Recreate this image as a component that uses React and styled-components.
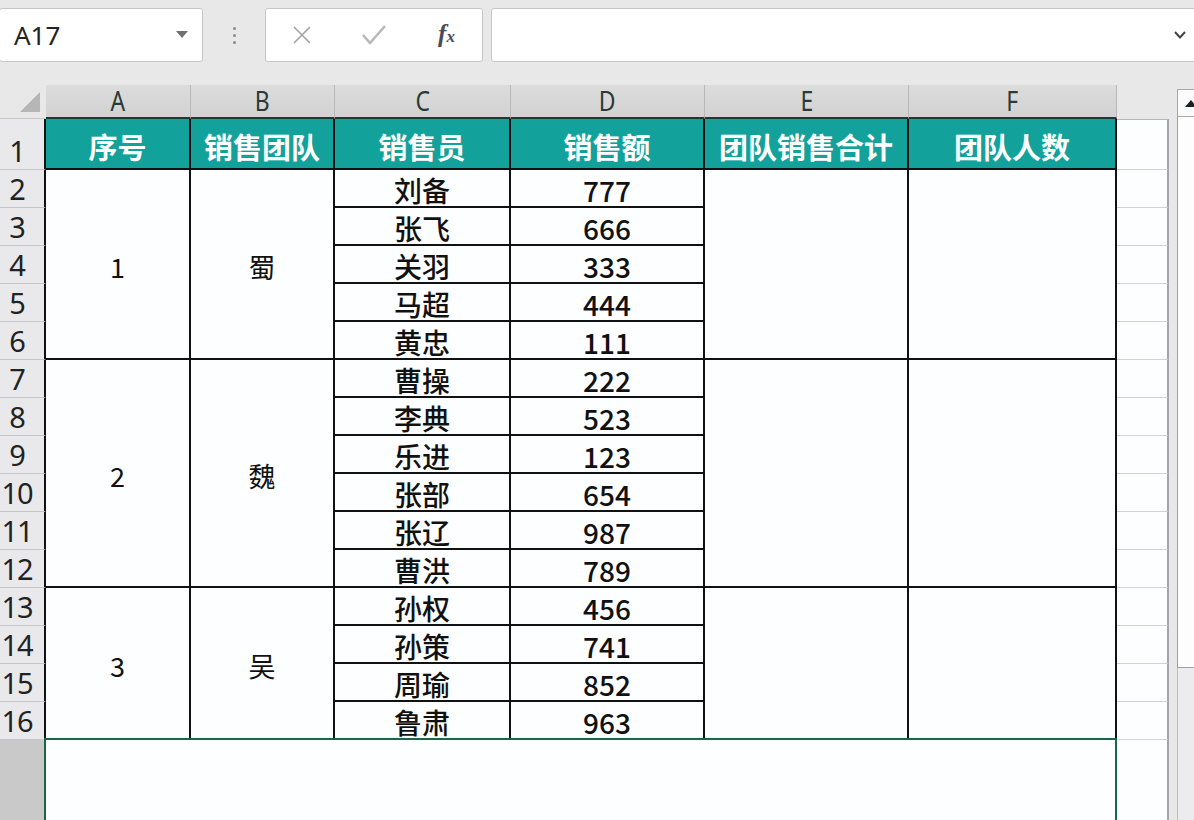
import React from 'react';
import styled, { createGlobalStyle } from 'styled-components';

const GlobalStyle = createGlobalStyle`
  html, body { margin: 0; padding: 0; }
  body {
    background: #e8e8e8;
    font-family: "Noto Sans", "Noto Sans CJK SC", sans-serif;
    overflow: hidden;
  }
`;

const CJK = `"Noto Sans CJK SC", "Noto Sans", sans-serif`;

const Page = styled.div`
  width: 1194px;
  height: 820px;
  overflow: hidden;
  background: #e8e8e8;
  display: flex;
  flex-direction: column;
`;

const FormulaBar = styled.div`
  display: flex;
  align-items: stretch;
  height: 54px;
  margin-top: 8px;
  flex: none;
`;

const NameBox = styled.div`
  width: 204px;
  margin-left: -1px;
  box-sizing: border-box;
  background: #fff;
  border: 1px solid #c6c6c6;
  border-radius: 3px;
  display: flex;
  align-items: center;
  justify-content: space-between;
  padding: 0 14px 0 14px;
  font-size: 26px;
  color: #222;
`;

const Caret = styled.span`
  width: 0;
  height: 0;
  border-left: 6px solid transparent;
  border-right: 6px solid transparent;
  border-top: 7px solid #707070;
  margin-top: -2px;
`;

const DotHolder = styled.div`
  width: 62px;
  display: flex;
  align-items: center;
  justify-content: center;
`;

const DotStack = styled.div`
  display: flex;
  flex-direction: column;
  gap: 4px;
`;

const Dot = styled.span`
  width: 3px;
  height: 3px;
  border-radius: 50%;
  background: #8a8a8a;
`;

const FxBox = styled.div`
  width: 218px;
  box-sizing: border-box;
  background: #fff;
  border: 1px solid #c6c6c6;
  border-radius: 3px;
  display: flex;
`;

const FxButton = styled.div`
  width: 72px;
  display: flex;
  align-items: center;
  justify-content: center;
`;

const FxLabel = styled.span`
  font-family: "Liberation Serif", "DejaVu Serif", serif;
  font-style: italic;
  font-weight: bold;
  color: #4a4a58;
  font-size: 25px;
  letter-spacing: -1px;
  margin-top: -2px;
  & > small {
    font-size: 17px;
    margin-left: 1px;
  }
`;

const FormulaInput = styled.div`
  flex: 1;
  margin-left: 8px;
  margin-right: -4px;
  background: #fff;
  border: 1px solid #c6c6c6;
  border-radius: 3px;
  display: flex;
  align-items: center;
  justify-content: flex-end;
  padding-right: 10px;
`;

const SheetArea = styled.div`
  display: flex;
  margin-top: 23px;
  flex: 1;
  min-height: 0;
`;

const Grid = styled.div`
  display: grid;
  grid-template-columns: 46px 145px 144px 176px 194px 204px 208px 52px;
  grid-template-rows: 34px 51px repeat(15, 38px) 120px;
  width: 1169px;
  flex: none;
  & > * { box-sizing: border-box; }
`;

const Corner = styled.div`
  position: relative;
  background: #e8e8e8;
  border-bottom: 1px solid #c8c8c8;
  &::after {
    content: "";
    position: absolute;
    right: 6px;
    bottom: 6px;
    width: 0;
    height: 0;
    border-left: 20px solid transparent;
    border-bottom: 20px solid #b6b6b6;
  }
`;

const ColHead = styled.div`
  background: linear-gradient(#dcdcdc, #d2d2d2);
  border-right: 1px solid #b8b8b8;
  border-bottom: 2px solid #1d3a2e;
  display: flex;
  align-items: flex-end;
  justify-content: center;
  padding-bottom: 1px;
  font-size: 28px;
  line-height: 31px;
  color: #2b3a34;
  & > span { display: inline-block; transform: scaleX(0.82); }
`;

const HeaderGap = styled.div`
  background: transparent;
`;

const RowHead = styled.div`
  background: ${p => (p.$selected ? '#c9c9c9' : '#e9e9eb')};
  border-bottom: 1px solid #c6c6c6;
  border-right: 2px solid #111;
  display: flex;
  align-items: flex-end;
  justify-content: center;
  padding-right: 10px;
  padding-bottom: 1px;
  font-size: 29px;
  line-height: 34px;
  color: #222;
  letter-spacing: -1px;
`;

const HeadCell = styled.div`
  background: #12a29b;
  border-right: 2px solid #111;
  border-bottom: 2px solid #111;
  color: #fff;
  font-family: ${CJK};
  font-weight: 700;
  font-size: 29px;
  display: flex;
  align-items: center;
  justify-content: center;
  padding-top: 5px;
  white-space: nowrap;
`;

const Cell = styled.div`
  grid-row: span ${p => p.$rows || 1};
  background: #fdfeff;
  border-right: 2px solid #111;
  border-bottom: 2px solid #111;
  color: #111;
  font-family: ${CJK};
  font-weight: ${p => (p.$merged ? 400 : 500)};
  font-size: ${p => (p.$merged ? '27px' : '28px')};
  display: flex;
  align-items: center;
  justify-content: center;
  padding-top: 4px;
  line-height: 1;
`;

const Selected = styled.div`
  grid-column: span 6;
  background: #fdfeff;
  border: 2px solid #1b6644;
  margin-left: -2px;
  margin-top: -2px;
`;

const Filler = styled.div`
  background: #fdfeff;
  border-bottom: 1px solid #d2d2d2;
  border-right: 2px solid #a4a4aa;
  border-top: ${p => (p.$first ? '1px solid #b8b8b8' : 'none')};
`;

const Scrollbar = styled.div`
  margin-left: 8px;
  flex: 1;
  margin-right: -6px;
  padding-top: 4px;
  display: flex;
  flex-direction: column;
`;

const ScrollButton = styled.div`
  height: 28px;
  box-sizing: border-box;
  background: #fbfbfb;
  border: 1px solid #a8a8a8;
  display: flex;
  align-items: center;
  justify-content: center;
  padding-left: 4px;
`;

const UpArrow = styled.span`
  width: 0;
  height: 0;
  border-left: 6px solid transparent;
  border-right: 6px solid transparent;
  border-bottom: 7px solid #1e1e28;
`;

const Thumb = styled.div`
  height: 551px;
  box-sizing: border-box;
  background: #fdfdfd;
  border-left: 1px solid #a0a0a0;
  border-bottom: 1px solid #a0a0a0;
`;

const Track = styled.div`
  flex: 1;
  background: #ececef;
  border-left: 1px solid #bdbdbd;
`;

const groups = [
  { id: '1', team: '蜀', members: [['刘备', 777], ['张飞', 666], ['关羽', 333], ['马超', 444], ['黄忠', 111]] },
  { id: '2', team: '魏', members: [['曹操', 222], ['李典', 523], ['乐进', 123], ['张部', 654], ['张辽', 987], ['曹洪', 789]] },
  { id: '3', team: '吴', members: [['孙权', 456], ['孙策', 741], ['周瑜', 852], ['鲁肃', 963]] },
];

const columns = ['A', 'B', 'C', 'D', 'E', 'F'];
const headers = ['序号', '销售团队', '销售员', '销售额', '团队销售合计', '团队人数'];

function buildRows() {
  const out = [];
  let row = 2;
  groups.forEach(g => {
    const n = g.members.length;
    g.members.forEach(([name, amount], i) => {
      out.push(<RowHead key={`rh${row}`}>{row}</RowHead>);
      if (i === 0) {
        out.push(<Cell key={`a${row}`} $rows={n} $merged>{g.id}</Cell>);
        out.push(<Cell key={`b${row}`} $rows={n} $merged>{g.team}</Cell>);
      }
      out.push(<Cell key={`c${row}`}>{name}</Cell>);
      out.push(<Cell key={`d${row}`}>{amount}</Cell>);
      if (i === 0) {
        out.push(<Cell key={`e${row}`} $rows={n} $merged />);
        out.push(<Cell key={`f${row}`} $rows={n} $merged />);
      }
      out.push(<Filler key={`g${row}`} />);
      row += 1;
    });
  });
  return out;
}

export default function App() {
  return (
    <Page>
      <GlobalStyle />
      <FormulaBar>
        <NameBox>
          <span>A17</span>
          <Caret />
        </NameBox>
        <DotHolder>
          <DotStack>
            <Dot />
            <Dot />
            <Dot />
          </DotStack>
        </DotHolder>
        <FxBox>
          <FxButton>
            <svg width="22" height="22" viewBox="0 0 22 22">
              <path d="M3 3 L19 19 M19 3 L3 19" stroke="#a2a2a2" strokeWidth="1.6" fill="none" />
            </svg>
          </FxButton>
          <FxButton>
            <svg width="28" height="24" viewBox="0 0 28 24">
              <path d="M3 12 L10 20 L25 3" stroke="#b8b8b8" strokeWidth="2.6" fill="none" strokeLinejoin="round" />
            </svg>
          </FxButton>
          <FxButton>
            <FxLabel>f<small>x</small></FxLabel>
          </FxButton>
        </FxBox>
        <FormulaInput>
          <svg width="14" height="10" viewBox="0 0 14 10">
            <path d="M2 2 L7 7.5 L12 2" stroke="#444" strokeWidth="2" fill="none" />
          </svg>
        </FormulaInput>
      </FormulaBar>
      <SheetArea>
        <Grid>
          <Corner />
          {columns.map(c => (
            <ColHead key={c}><span>{c}</span></ColHead>
          ))}
          <HeaderGap />
          <RowHead>1</RowHead>
          {headers.map(h => (
            <HeadCell key={h}>{h}</HeadCell>
          ))}
          <Filler $first />
          {buildRows()}
          <RowHead $selected />
          <Selected />
          <Filler />
        </Grid>
        <Scrollbar>
          <ScrollButton>
            <UpArrow />
          </ScrollButton>
          <Thumb />
          <Track />
        </Scrollbar>
      </SheetArea>
    </Page>
  );
}
